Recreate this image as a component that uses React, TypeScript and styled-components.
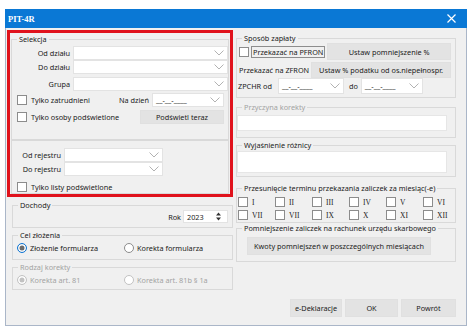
import React, { FC } from 'react';
import styled, { createGlobalStyle, css } from 'styled-components';

const GlobalStyle = createGlobalStyle`
  html, body {
    margin: 0;
    padding: 0;
    background: #fff;
  }

  body {
    font-family: "Noto Sans", "Liberation Sans", sans-serif;
    font-size: 7.3px;
    color: #1b1b1b;
  }
`;

const Window = styled.div`
  margin: 9px 0 0 5px;
  width: 462px;
  height: 317px;
  box-sizing: border-box;
  border: 1px solid #aab6c8;
  border-top: none;
  background: #f0f0f0;
  display: flex;
  flex-direction: column;
`;

const TitleBar = styled.div`
  height: 19px;
  margin: 0 -1px;
  background: #0a78d5;
  color: #fff;
  display: flex;
  align-items: center;
  justify-content: space-between;
  padding: 0 11px 0 3px;
`;

const Title = styled.span`
  font-family: "Liberation Serif", serif;
  font-weight: bold;
  font-size: 8.5px;
`;

const Body = styled.div`
  display: flex;
  padding: 2px 0 0 1px;
`;

const LeftCol = styled.div`
  width: 226px;
  display: flex;
  flex-direction: column;
`;

const RightCol = styled.div`
  width: 220px;
  margin: 3px 0 0 3px;
  display: flex;
  flex-direction: column;
`;

const RedFrame = styled.div`
  border: 3px solid #e0121c;
  padding: 1px 1px 0;
  display: flex;
  flex-direction: column;
`;

const Group = styled.fieldset<{ $top?: number; $height: number; $inset?: number }>`
  margin: ${(p) => p.$top ?? 0}px 0 0 ${(p) => p.$inset ?? 0}px;
  padding: 0;
  min-width: 0;
  height: ${(p) => p.$height}px;
  box-sizing: border-box;
  border: 1px solid #d9d9d9;
  display: flex;
  flex-direction: column;
`;

const Legend = styled.legend<{ $disabled?: boolean }>`
  margin-left: 5px;
  padding: 0 2px;
  line-height: 10px;
  color: ${(p) => (p.$disabled ? '#a3a3a3' : '#1b1b1b')};
`;

const Row = styled.div<{ $top?: number; $height?: number; $pad?: number }>`
  display: flex;
  align-items: center;
  margin-top: ${(p) => p.$top ?? 0}px;
  height: ${(p) => p.$height ?? 14}px;
  padding: 0 ${(p) => (p.$pad !== undefined ? 4 : 0)}px 0 ${(p) => p.$pad ?? 0}px;
  white-space: nowrap;
`;

const FieldLabel = styled.span<{ $width: number }>`
  width: ${(p) => p.$width}px;
  text-align: right;
  margin-right: 3px;
  flex-shrink: 0;
`;

const Text = styled.span<{ $left?: number; $right?: number; $disabled?: boolean }>`
  margin-left: ${(p) => p.$left ?? 0}px;
  margin-right: ${(p) => p.$right ?? 0}px;
  color: ${(p) => (p.$disabled ? '#a3a3a3' : 'inherit')};
`;

const Spacer = styled.div`
  flex: 1;
`;

const ComboBox = styled.div<{ $width?: number }>`
  ${(p) =>
    p.$width
      ? css`
          width: ${p.$width}px;
        `
      : css`
          flex: 1;
        `}
  height: 100%;
  box-sizing: border-box;
  background: #fff;
  border: 1px solid #e3e3e3;
  display: flex;
  align-items: center;
  justify-content: space-between;
  padding: 0 3px 0 3px;
  flex-shrink: 0;
`;

const Chevron = () => (
  <svg width="10" height="6" viewBox="0 0 10 6">
    <path d="M0.5 0.5 L5 5 L9.5 0.5" fill="none" stroke="#a9a9a9" strokeWidth="0.9" />
  </svg>
);

const Combo: FC<{ width?: number; text?: string }> = ({ width, text }) => (
  <ComboBox $width={width}>
    <span>{text}</span>
    <Chevron />
  </ComboBox>
);

const CheckBox = styled.span`
  width: 10px;
  height: 10px;
  box-sizing: border-box;
  background: #fff;
  border: 1px solid #8c8c8c;
  flex-shrink: 0;
`;

const Radio = styled.span<{ $checked?: boolean; $disabled?: boolean }>`
  width: 10px;
  height: 10px;
  box-sizing: border-box;
  border-radius: 50%;
  background: #fff;
  flex-shrink: 0;
  border: ${(p) => (p.$checked && !p.$disabled ? '1.5px solid #0b74d4' : '1px solid #8c8c8c')};
  ${(p) =>
    p.$disabled &&
    css`
      border-color: #c2c2c2;
    `}
  ${(p) =>
    p.$checked &&
    css`
      box-shadow: inset 0 0 0 1.5px #fff, inset 0 0 0 5px ${p.$disabled ? '#c2c2c2' : '#6b6b6b'};
    `}
`;

const RadioItem = styled.div<{ $width?: number }>`
  display: flex;
  align-items: center;
  gap: 3px;
  width: ${(p) => (p.$width ? `${p.$width}px` : 'auto')};
`;

const Button = styled.div<{ $width?: number; $left?: number }>`
  ${(p) =>
    p.$width
      ? css`
          width: ${p.$width}px;
        `
      : css`
          flex: 1;
        `}
  margin-left: ${(p) => p.$left ?? 0}px;
  height: 100%;
  box-sizing: border-box;
  background: #e3e3e3;
  border: 1px solid #e0e0e0;
  display: flex;
  align-items: center;
  justify-content: center;
  flex-shrink: 0;
`;

const FocusLabel = styled.span`
  margin-left: 2px;
  padding: 0 1px;
  height: 12px;
  line-height: 11px;
  box-sizing: border-box;
  border: 1px solid #8d8d8d;
`;

const TextBox = styled.div<{ $top: number; $height: number }>`
  margin: ${(p) => p.$top}px 8px 0 0;
  height: ${(p) => p.$height}px;
  background: #fff;
  border: 1px solid #e6e6e6;
  box-sizing: border-box;
`;

const SpinBox = styled.div`
  width: 45px;
  height: 13px;
  box-sizing: border-box;
  background: #fff;
  border: 1px solid #e3e3e3;
  display: flex;
  align-items: center;
  justify-content: space-between;
  padding: 0 6px 0 3px;
`;

const MonthGrid = styled.div`
  display: grid;
  grid-template-columns: repeat(5, 37px) 1fr;
  row-gap: 3px;
  margin-top: 4px;
  padding-left: 1px;
`;

const MonthItem = styled.div`
  display: flex;
  align-items: center;
  gap: 4px;
  height: 10px;
`;

const Roman = styled.span`
  font-family: "Liberation Serif", serif;
  font-size: 7.5px;
`;

const Footer = styled.div`
  display: flex;
  justify-content: flex-end;
  gap: 3px;
  height: 18px;
  margin-top: 37px;
`;

const months = ['I', 'II', 'III', 'IV', 'V', 'VI', 'VII', 'VII', 'IX', 'X', 'XI', 'XII'];

const DATE = '__-__-____';

const App: FC = () => (
  <>
    <GlobalStyle />
    <Window>
      <TitleBar>
        <Title>PIT-4R</Title>
        <svg width="9" height="9" viewBox="0 0 9 9">
          <path d="M0.5 0.5 L8.5 8.5 M8.5 0.5 L0.5 8.5" stroke="#fff" strokeWidth="1.2" />
        </svg>
      </TitleBar>

      <Body>
        <LeftCol>
          <RedFrame>
            <Group $height={106}>
              <Legend>Selekcja</Legend>
              <Row $top={2}>
                <FieldLabel $width={58}>Od działu</FieldLabel>
                <Combo />
              </Row>
              <Row>
                <FieldLabel $width={58}>Do działu</FieldLabel>
                <Combo />
              </Row>
              <Row $top={3}>
                <FieldLabel $width={58}>Grupa</FieldLabel>
                <Combo />
              </Row>
              <Row $top={2} $pad={5}>
                <CheckBox />
                <Text $left={4}>Tylko zatrudnieni</Text>
                <Spacer />
                <Text $right={3}>Na dzień</Text>
                <Combo width={72} text={DATE} />
              </Row>
              <Row $top={3} $pad={5}>
                <CheckBox />
                <Text $left={4}>Tylko osoby podświetlone</Text>
                <Spacer />
                <Button $width={84}>Podświetl teraz</Button>
              </Row>
            </Group>

            <Group $height={54}>
              <Row $top={7}>
                <FieldLabel $width={49}>Od rejestru</FieldLabel>
                <Combo width={99} />
              </Row>
              <Row>
                <FieldLabel $width={49}>Do rejestru</FieldLabel>
                <Combo width={99} />
              </Row>
              <Row $top={6} $height={10} $pad={5}>
                <CheckBox />
                <Text $left={4}>Tylko listy podświetlone</Text>
              </Row>
            </Group>
          </RedFrame>

          <Group $top={3} $height={28} $inset={5}>
            <Legend>Dochody</Legend>
            <Row $height={13} $pad={4}>
              <Spacer />
              <Text $right={2}>Rok</Text>
              <SpinBox>
                <span>2023</span>
                <svg width="5" height="9" viewBox="0 0 5 9">
                  <path d="M2.5 0.5 L5 3.5 L0 3.5 Z M2.5 8.5 L5 5.5 L0 5.5 Z" fill="#333" />
                </svg>
              </SpinBox>
            </Row>
          </Group>

          <Group $top={2} $height={30} $inset={5}>
            <Legend>Cel złożenia</Legend>
            <Row $top={2} $height={12} $pad={4}>
              <RadioItem $width={107}>
                <Radio $checked />
                <span>Złożenie formularza</span>
              </RadioItem>
              <RadioItem>
                <Radio />
                <span>Korekta formularza</span>
              </RadioItem>
            </Row>
          </Group>

          <Group $top={2} $height={28} $inset={5}>
            <Legend $disabled>Rodzaj korekty</Legend>
            <Row $top={2} $height={12} $pad={4}>
              <RadioItem $width={107}>
                <Radio $checked $disabled />
                <Text $disabled>Korekta art. 81</Text>
              </RadioItem>
              <RadioItem>
                <Radio $disabled />
                <Text $disabled>Korekta art. 81b § 1a</Text>
              </RadioItem>
            </Row>
          </Group>
        </LeftCol>

        <RightCol>
          <Group $height={65}>
            <Legend>Sposób zapłaty</Legend>
            <Row $height={17} $pad={2}>
              <CheckBox />
              <FocusLabel>Przekazać na PFRON</FocusLabel>
              <Button $left={2}>Ustaw pomniejszenie %</Button>
            </Row>
            <Row $top={2} $height={16} $pad={2}>
              <span>Przekazać na ZFRON</span>
              <Button $left={2}>Ustaw % podatku od os.niepełnospr.</Button>
            </Row>
            <Row $height={16} $pad={1}>
              <Text $right={6}>ZPCHR od</Text>
              <Combo width={66} text={DATE} />
              <Text $left={5} $right={3}>do</Text>
              <Combo width={62} text={DATE} />
            </Row>
          </Group>

          <Group $top={4} $height={36}>
            <Legend $disabled>Przyczyna korekty</Legend>
            <TextBox $top={3} $height={16} />
          </Group>

          <Group $top={2} $height={37}>
            <Legend>Wyjaśnienie różnicy</Legend>
            <TextBox $top={1} $height={22} />
          </Group>

          <Group $top={6} $height={40}>
            <Legend>Przesunięcie terminu przekazania zaliczek za miesiąc(-e)</Legend>
            <MonthGrid>
              {months.map((m, i) => (
                <MonthItem key={i}>
                  <CheckBox />
                  <Roman>{m}</Roman>
                </MonthItem>
              ))}
            </MonthGrid>
          </Group>

          <Group $height={39}>
            <Legend>Pomniejszenie zaliczek na rachunek urzędu skarbowego</Legend>
            <Row $top={4} $height={18} $pad={10}>
              <Button $width={184}>Kwoty pomniejszeń w poszczególnych miesiącach</Button>
            </Row>
          </Group>

          <Footer>
            <Button $width={52}>e-Deklaracje</Button>
            <Button $width={53}>OK</Button>
            <Button $width={55}>Powrót</Button>
          </Footer>
        </RightCol>
      </Body>
    </Window>
  </>
);

export default App;
